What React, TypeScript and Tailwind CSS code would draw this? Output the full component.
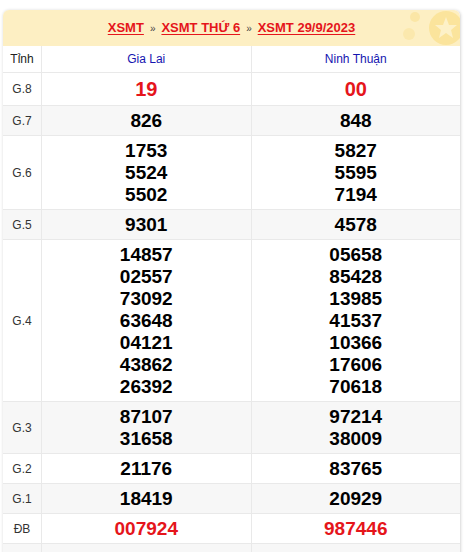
const rows: { label: string; a: string[]; b: string[]; kind?: "g8" | "db" }[] = [
  { label: "G.8", a: ["19"], b: ["00"], kind: "g8" },
  { label: "G.7", a: ["826"], b: ["848"] },
  { label: "G.6", a: ["1753", "5524", "5502"], b: ["5827", "5595", "7194"] },
  { label: "G.5", a: ["9301"], b: ["4578"] },
  {
    label: "G.4",
    a: ["14857", "02557", "73092", "63648", "04121", "43862", "26392"],
    b: ["05658", "85428", "13985", "41537", "10366", "17606", "70618"],
  },
  { label: "G.3", a: ["87107", "31658"], b: ["97214", "38009"] },
  { label: "G.2", a: ["21176"], b: ["83765"] },
  { label: "G.1", a: ["18419"], b: ["20929"] },
  { label: "ĐB", a: ["007924"], b: ["987446"], kind: "db" },
];

function Cell({ nums, kind }: { nums: string[]; kind?: "g8" | "db" }) {
  const cls =
    kind === "g8"
      ? "text-[20px] leading-[25px] text-[#e5151b] font-bold"
      : kind === "db"
      ? "text-[19px] leading-[22px] text-[#e5151b] font-bold"
      : "text-[19px] leading-[22px] text-black font-bold";
  return (
    <div className="flex-1 flex flex-col items-center justify-center py-[3.5px] border-l border-[#e9e9e9]">
      {nums.map((n, i) => (
        <span key={i} className={cls}>{n}</span>
      ))}
    </div>
  );
}

export default function App() {
  return (
    <div className="w-[472px] h-[552px] bg-white pt-[10px] pl-[3px] overflow-hidden font-['Liberation_Sans',Arial,sans-serif]">
      <div className="w-[458px] rounded-t-md shadow-[0_0_3px_rgba(0,0,0,0.15)] border-r border-[#e4e4e4]">
        {/* Header */}
        <div className="relative h-[36px] bg-[#fdefc3] rounded-t-md flex items-center justify-center gap-[6px] overflow-hidden">
          <svg className="absolute right-0 top-0" width="70" height="36" viewBox="0 0 70 36">
            <circle cx="56" cy="18" r="17" fill="#fbe49c" />
            <path d="M56 7 L59 15 L67 15 L61 20 L63 28 L56 23 L49 28 L51 20 L45 15 L53 15 Z" fill="#fdf1c8" />
            <circle cx="25" cy="7" r="5" fill="#fbe6a6" />
            <circle cx="19" cy="24" r="6" fill="#fbe8ad" />
          </svg>
          <span className="relative text-[13px] font-bold text-[#e5151b] underline underline-offset-2">XSMT</span>
          <span className="relative text-[10px] text-[#444]">»</span>
          <span className="relative text-[13px] font-bold text-[#e5151b] underline underline-offset-2">XSMT THỨ 6</span>
          <span className="relative text-[10px] text-[#444]">»</span>
          <span className="relative text-[13px] font-bold text-[#e5151b] underline underline-offset-2">XSMT 29/9/2023</span>
        </div>
        {/* Column titles */}
        <div className="flex h-[27px] bg-white border-b border-[#e9e9e9]">
          <div className="w-[38px] flex items-center justify-center text-[12px] text-[#222]">Tỉnh</div>
          <div className="flex-1 flex items-center justify-center text-[12px] text-[#1515b0] border-l border-[#e9e9e9]">Gia Lai</div>
          <div className="flex-1 flex items-center justify-center text-[12px] text-[#1515b0] border-l border-[#e9e9e9]">Ninh Thuận</div>
        </div>
        {rows.map((r, i) => (
          <div key={r.label} className={`flex border-b border-[#e9e9e9] ${i % 2 === 1 ? "bg-[#f7f7f7]" : "bg-white"}`}>
            <div className="w-[38px] flex items-center justify-center text-[12px] text-[#333]">{r.label}</div>
            <Cell nums={r.a} kind={r.kind} />
            <Cell nums={r.b} kind={r.kind} />
          </div>
        ))}
        <div className="flex h-[10px] bg-[#f7f7f7]">
          <div className="w-[38px]" />
          <div className="flex-1 border-l border-[#e9e9e9]" />
          <div className="flex-1 border-l border-[#e9e9e9]" />
        </div>
      </div>
    </div>
  );
}
